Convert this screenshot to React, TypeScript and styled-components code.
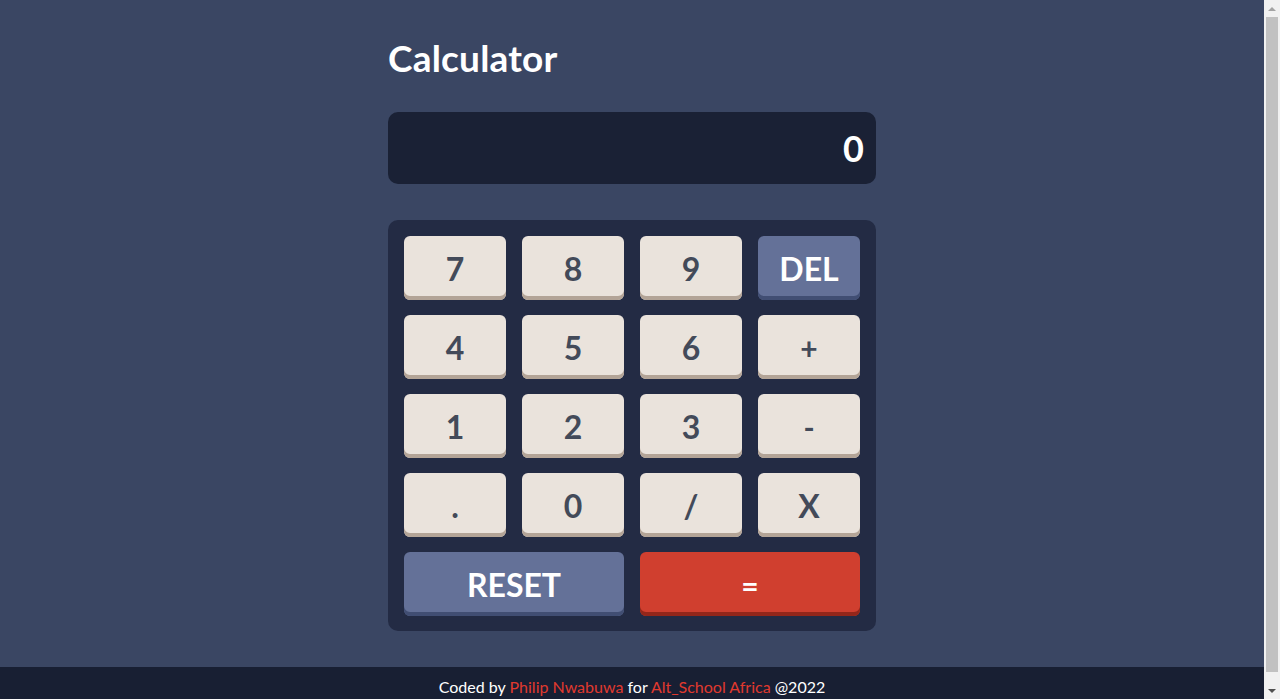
import React from "react";
import styled, { createGlobalStyle } from "styled-components";

const Global = createGlobalStyle`
  html, body { margin: 0; padding: 0; }
  html { background: #f1f1f1; }
  body {
    background: #3a4663;
    margin-right: 16px;
    font-family: "Lato", "Open Sans", sans-serif;
  }
  ::-webkit-scrollbar { display: none; width: 0; }
`;

const Page = styled.div`
  display: flex;
  flex-direction: column;
  min-height: 100vh;
`;

const Main = styled.main`
  width: 488px;
  margin: 0 auto;
  padding-top: 36px;
  padding-bottom: 36px;
  display: flex;
  flex-direction: column;
`;

const Title = styled.h1`
  margin: 0;
  color: #ffffff;
  font-size: 37px;
  font-weight: 700;
  line-height: 44px;
  letter-spacing: 0.2px;
`;

const Screen = styled.div`
  margin-top: 32px;
  height: 72px;
  background: #1a2135;
  border-radius: 10px;
  display: flex;
  align-items: center;
  justify-content: flex-end;
  padding: 0 12px;
  color: #fff;
  font-size: 36px;
  font-weight: 700;
`;

const Pad = styled.div`
  margin-top: 36px;
  background: #232b44;
  border-radius: 10px;
  padding: 16px 16px 15px;
  display: grid;
  grid-template-columns: repeat(4, 1fr);
  column-gap: 16px;
  row-gap: 15px;
`;

type Variant = "light" | "blue" | "red";

const bg: Record<Variant, string> = { light: "#eae3dc", blue: "#647198", red: "#d03f2f" };
const sh: Record<Variant, string> = { light: "#b3a497", blue: "#414e73", red: "#93261a" };

const Key = styled.button<{ $v: Variant; $wide?: boolean; $size?: number }>`
  grid-column: ${(p) => (p.$wide ? "span 2" : "span 1")};
  height: 64px;
  border: none;
  border-radius: 6px;
  background: ${(p) => bg[p.$v]};
  box-shadow: inset 0 -4px 0 ${(p) => sh[p.$v]};
  color: ${(p) => (p.$v === "light" ? "#434a59" : "#ffffff")};
  font-family: "Lato", "Open Sans", sans-serif;
  font-size: ${(p) => p.$size ?? 32}px;
  font-weight: 700;
  padding: 2px 0 0;
  line-height: 1;
  cursor: pointer;
`;

const Footer = styled.footer`
  margin-top: auto;
  background: #181f33;
  height: 40px;
  display: flex;
  align-items: center;
  justify-content: center;
  color: #ffffff;
  font-size: 16px;
  font-family: "Lato", "Open Sans", sans-serif;
  line-height: 20px;
`;

const Link = styled.a`
  color: #e0392e;
  text-decoration: none;
`;

/* Scrollbar strip drawn over the right edge (browser chrome in the reference) */
const ScrollTrack = styled.div`
  position: fixed;
  top: 0;
  right: 0;
  width: 16px;
  height: 100vh;
  background: #f1f1f1;
  display: flex;
  flex-direction: column;
  align-items: center;
`;

const Arrow = styled.div<{ $down?: boolean }>`
  height: 17px;
  width: 16px;
  display: flex;
  align-items: center;
  justify-content: center;
  &::after {
    content: "";
    width: 0;
    height: 0;
    border-left: 4px solid transparent;
    border-right: 4px solid transparent;
    ${(p) =>
      p.$down
        ? "border-top: 4px solid #505050;"
        : "border-bottom: 4px solid #a3a3a3;"}
  }
`;

const Thumb = styled.div`
  flex: 1;
  width: 12px;
  margin-bottom: 10px;
  background: #c1c1c1;
`;

const keys: { l: string; v?: Variant; size?: number }[] = [
  { l: "7" }, { l: "8" }, { l: "9" }, { l: "DEL", v: "blue" },
  { l: "4" }, { l: "5" }, { l: "6" }, { l: "+", size: 30 },
  { l: "1" }, { l: "2" }, { l: "3" }, { l: "-", size: 30 },
  { l: "." }, { l: "0" }, { l: "/" }, { l: "X" },
];

export default function App() {
  return (
    <Page>
      <Global />
      <Main>
        <Title>Calculator</Title>
        <Screen>0</Screen>
        <Pad>
          {keys.map((k) => (
            <Key key={k.l} $v={k.v ?? "light"} $size={k.size}>
              {k.l}
            </Key>
          ))}
          <Key $v="blue" $wide>RESET</Key>
          <Key $v="red" $wide $size={30}>=</Key>
        </Pad>
      </Main>
      <Footer>
        <span>
          Coded by <Link>Philip Nwabuwa</Link> for <Link>Alt_School Africa</Link> @2022
        </span>
      </Footer>
      <ScrollTrack aria-hidden>
        <Arrow />
        <Thumb />
        <Arrow $down />
      </ScrollTrack>
    </Page>
  );
}
